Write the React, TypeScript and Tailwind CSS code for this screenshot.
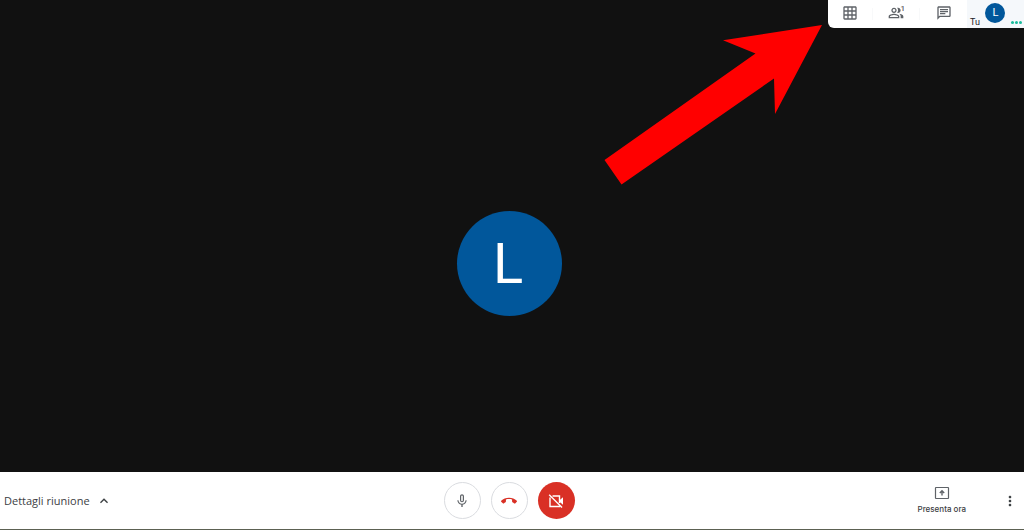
import {
  MdCallEnd,
  MdExpandLess,
  MdGridOn,
  MdMicNone,
  MdMoreVert,
  MdOutlineChat,
  MdOutlinePeopleAlt,
} from "react-icons/md";

function TopBar() {
  return (
    <div className="absolute top-0 right-0 flex h-7 overflow-hidden rounded-bl-md bg-white text-[#5f6368]">
      <button aria-label="Cambia layout" className="flex w-11 items-center justify-center pb-0.5">
        <MdGridOn className="size-4" />
      </button>
      <span className="mt-2 h-3 w-px bg-[#f8f9fa]" />
      <button aria-label="Persone" className="relative flex w-[46px] items-center justify-center pb-0.5">
        <MdOutlinePeopleAlt className="size-4" />
        <span className="absolute top-1 right-3.5 text-[8px] leading-[10px] font-medium">1</span>
      </button>
      <span className="mt-2 h-3 w-px bg-[#f8f9fa]" />
      <button aria-label="Chat" className="flex w-[47px] items-center justify-center pb-0.5">
        <MdOutlineChat className="size-4" />
      </button>
      <div className="flex w-[57px] justify-between bg-[#f5f8fb] pr-0.5 pl-[3px]">
        <span className="self-end text-[9px] leading-3 text-[#202124]">Tu</span>
        <span className="mt-[3px] flex size-5 items-center justify-center rounded-full bg-[#01579b] text-[11px] text-white">
          L
        </span>
        <span className="mb-1 flex gap-px self-end">
          <i className="size-[3px] rounded-full bg-[#1abc9c]" />
          <i className="size-[3px] rounded-full bg-[#1abc9c]" />
          <i className="size-[3px] rounded-full bg-[#1abc9c]" />
        </span>
      </div>
    </div>
  );
}

function Pointer() {
  return (
    <svg
      aria-hidden="true"
      viewBox="0 0 218 160"
      className="absolute top-[25px] right-[202px] h-[160px] w-[218px] fill-[#ff0000]"
    >
      <path d="M218 0 119 15.2 151.5 28.5 0.5 135 17.5 159.5 170 53.5 171 89Z" />
    </svg>
  );
}

function CameraOffIcon() {
  return (
    <svg viewBox="0 0 16 16" aria-hidden="true" className="size-4 fill-none stroke-current">
      <path d="M4.5 3H11.5V10M11.5 12.5V13.5H2V4.5" strokeWidth="1.4" />
      <path d="M1.2 1.8 14 14.4" strokeWidth="1.4" />
      <path d="M11.5 7.2 15 4.2V11.8L11.5 8.8Z" className="fill-current stroke-none" />
    </svg>
  );
}

function PresentIcon() {
  return (
    <svg viewBox="0 0 16 16" aria-hidden="true" className="size-4 fill-none stroke-[#5f6368]">
      <rect x="1.5" y="2.5" width="13" height="11" rx="0.5" strokeWidth="1.2" />
      <path d="M8 10.5V6M5.8 8 8 5.8 10.2 8" strokeWidth="1.4" />
    </svg>
  );
}

export default function App() {
  return (
    <div className="relative flex min-h-screen flex-col bg-[#111111] font-['Roboto',sans-serif]">
      <main className="flex flex-1 items-center justify-center pt-[54px] pr-1.5">
        <div className="flex size-[105px] items-center justify-center rounded-full bg-[#01579b] pt-0.5 pr-0.5 text-[56px] leading-none text-white">
          L
        </div>
      </main>
      <TopBar />
      <Pointer />
      <footer className="grid h-[58px] grid-cols-[1fr_auto_1fr] items-center border-b border-[#5c6152] bg-white pr-1.5 text-[#3c4043]">
        <button className="flex items-center gap-1.5 justify-self-start pl-1 font-['Open_Sans',sans-serif] text-[11px] leading-4">
          Dettagli riunione
          <MdExpandLess className="size-4" />
        </button>
        <div className="flex gap-2.5">
          <button
            aria-label="Disattiva microfono"
            className="flex size-[37px] items-center justify-center rounded-full border border-[#dadce0] text-[#5f6368]"
          >
            <MdMicNone className="size-4" />
          </button>
          <button
            aria-label="Abbandona chiamata"
            className="flex size-[37px] items-center justify-center rounded-full border border-[#dadce0] text-[#d93025]"
          >
            <MdCallEnd className="size-4" />
          </button>
          <button
            aria-label="Attiva videocamera"
            className="flex size-[37px] items-center justify-center rounded-full bg-[#d93025] text-white"
          >
            <CameraOffIcon />
          </button>
        </div>
        <div className="flex items-center gap-9 justify-self-end">
          <button className="flex flex-col items-center font-['Inter',sans-serif] text-[8px] leading-4 font-medium">
            <PresentIcon />
            Presenta ora
          </button>
          <button aria-label="Altre opzioni">
            <MdMoreVert className="size-4" />
          </button>
        </div>
      </footer>
    </div>
  );
}
